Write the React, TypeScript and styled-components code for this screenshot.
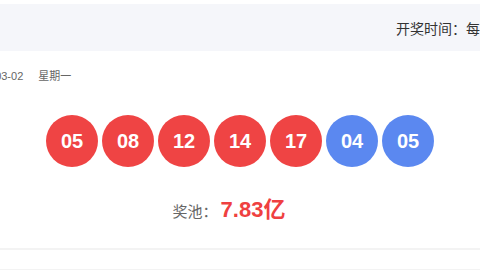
import React from "react";
import styled, { createGlobalStyle } from "styled-components";

const GlobalStyle = createGlobalStyle`
  html, body {
    margin: 0;
    padding: 0;
    background: #ffffff;
    overflow: hidden;
  }
  body {
    font-family: "Liberation Sans", "Noto Sans CJK SC", sans-serif;
  }
`;

const Page = styled.div`
  width: 640px;
  margin-left: -80px;
  padding-top: 4px;
`;

const Header = styled.div`
  height: 47px;
  background: #f5f6fa;
  display: flex;
  align-items: center;
  padding-left: 476px;
  font-size: 14px;
  color: #333333;
  white-space: nowrap;
  overflow: hidden;
`;

const Card = styled.div`
  padding: 18px 0 23px;
  border-bottom: 2px solid #f3f3f3;
  display: flex;
  flex-direction: column;
`;

const DateRow = styled.div`
  display: flex;
  gap: 15px;
  padding-left: 47px;
  font-size: 11px;
  line-height: 14px;
  color: #666666;
`;

const Balls = styled.div`
  margin-top: 32px;
  display: flex;
  justify-content: center;
  gap: 4px;
`;

const Ball = styled.div<{ $blue?: boolean }>`
  width: 52px;
  height: 52px;
  border-radius: 50%;
  background: ${(p) => (p.$blue ? "#5b88f0" : "#ef4444")};
  color: #ffffff;
  font-weight: bold;
  font-size: 20px;
  display: flex;
  align-items: center;
  justify-content: center;
`;

const Pool = styled.div`
  margin-top: 30px;
  display: flex;
  justify-content: center;
  align-items: baseline;
  line-height: 26px;
  padding-right: 22px;
`;

const PoolLabel = styled.span`
  font-size: 15px;
  color: #666666;
  margin-right: 3px;
`;

const PoolValue = styled.span`
  font-size: 22px;
  font-weight: bold;
  color: #ef4040;
`;

const NextRow = styled.div`
  height: 19px;
  border-bottom: 2px solid #f3f3f3;
`;

const red = ["05", "08", "12", "14", "17"];
const blue = ["04", "05"];

export default function App() {
  return (
    <>
      <GlobalStyle />
      <Page>
        <Header>开奖时间：每周一、三、六 21:15</Header>
        <Card>
          <DateRow>
            <span>2026-03-02</span>
            <span>星期一</span>
          </DateRow>
          <Balls>
            {red.map((n, i) => (
              <Ball key={"r" + i}>{n}</Ball>
            ))}
            {blue.map((n, i) => (
              <Ball key={"b" + i} $blue>
                {n}
              </Ball>
            ))}
          </Balls>
          <Pool>
            <PoolLabel>奖池：</PoolLabel>
            <PoolValue>7.83亿</PoolValue>
          </Pool>
        </Card>
        <NextRow />
      </Page>
    </>
  );
}
